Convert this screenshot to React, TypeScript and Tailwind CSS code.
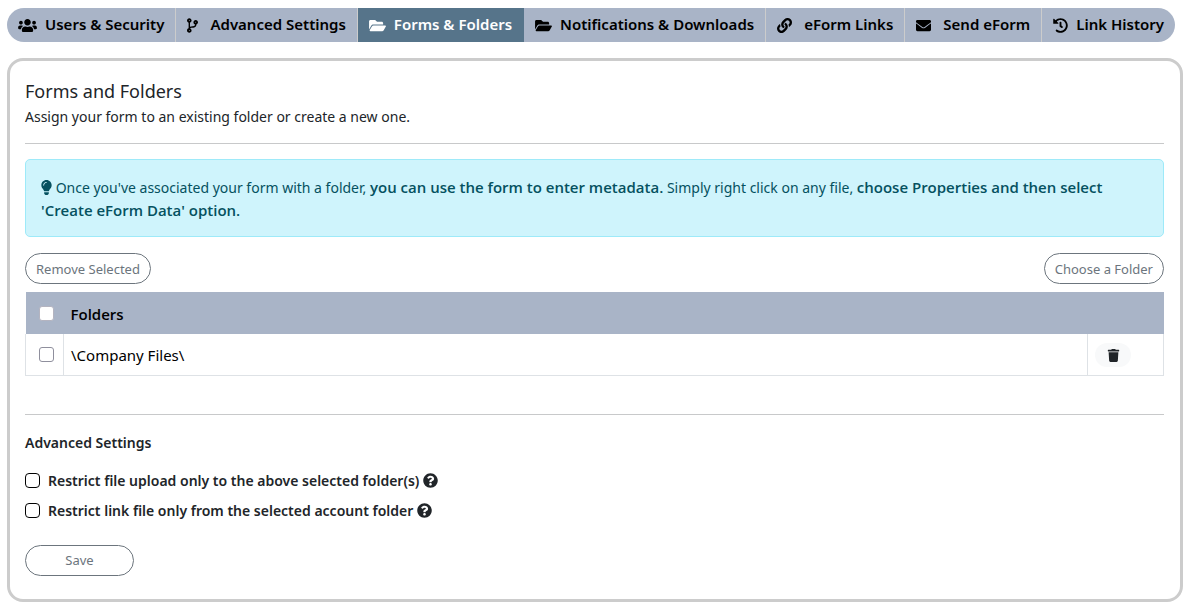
import { useState } from 'react';
import type { IconType } from 'react-icons';
import {
  FaUsers,
  FaCodeBranch,
  FaFolderOpen,
  FaLink,
  FaEnvelope,
  FaHistory,
  FaLightbulb,
  FaTrash,
  FaQuestionCircle,
} from 'react-icons/fa';

interface Tab {
  id: string;
  label: string;
  icon: IconType;
  iconWidth: string;
  gap: string;
}

const TABS: Tab[] = [
  { id: 'users', label: 'Users & Security', icon: FaUsers, iconWidth: 'w-[19px]', gap: 'gap-2' },
  { id: 'advanced', label: 'Advanced Settings', icon: FaCodeBranch, iconWidth: 'w-[11px]', gap: 'gap-3' },
  { id: 'folders', label: 'Forms & Folders', icon: FaFolderOpen, iconWidth: 'w-[17px]', gap: 'gap-2' },
  { id: 'notifications', label: 'Notifications & Downloads', icon: FaFolderOpen, iconWidth: 'w-[17px]', gap: 'gap-2' },
  { id: 'links', label: 'eForm Links', icon: FaLink, iconWidth: 'w-[15px]', gap: 'gap-3' },
  { id: 'send', label: 'Send eForm', icon: FaEnvelope, iconWidth: 'w-[15px]', gap: 'gap-3' },
  { id: 'history', label: 'Link History', icon: FaHistory, iconWidth: 'w-[15px]', gap: 'gap-2' },
];

const FOLDERS = ['\\Company Files\\'];

const OPTIONS = [
  { id: 'restrict-upload', label: 'Restrict file upload only to the above selected folder(s)' },
  { id: 'restrict-link', label: 'Restrict link file only from the selected account folder' },
];

const checkbox = 'block size-[15px] appearance-none bg-white border checked:bg-[#56748a]';
const strong = "font-['Open_Sans','Noto_Sans',sans-serif] text-[15px] font-semibold";
const outlineButton =
  'h-[31px] rounded-full border border-[#6c757d] text-[13px] leading-5 text-[#6c757d] hover:bg-gray-100';

function TabBar({ active, onSelect }: { active: string; onSelect: (id: string) => void }) {
  return (
    <nav className="flex w-fit overflow-hidden rounded-full bg-[#a9b4c7]">
      {TABS.map(({ id, label, icon: Icon, iconWidth, gap }) => (
        <button
          key={id}
          onClick={() => onSelect(id)}
          className={`flex h-[34px] items-center border-r px-[11px] text-[15px] font-semibold whitespace-nowrap last:border-r-0 ${gap} ${
            id === active ? 'border-[#56748a] bg-[#56748a] text-white' : 'border-[#ccc] text-black'
          }`}
        >
          <Icon className={`h-[15px] ${iconWidth}`} />
          {label}
        </button>
      ))}
    </nav>
  );
}

function FolderTable({ selected, onToggle }: { selected: string[]; onToggle: (folder: string) => void }) {
  return (
    <table className="mt-2 w-full table-fixed border-collapse text-left text-black">
      <thead>
        <tr className="h-[42px] bg-[#a9b4c7]">
          <th className="w-[38px] pl-[13px]">
            <input
              type="checkbox"
              aria-label="Select all folders"
              checked={selected.length === FOLDERS.length}
              onChange={() => FOLDERS.forEach(onToggle)}
              className={`${checkbox} rounded-[3px] border-[#b4b4c0]`}
            />
          </th>
          <th className={`pt-1 pl-[7px] ${strong}`}>Folders</th>
          <th className="w-[76px]" />
        </tr>
      </thead>
      <tbody>
        {FOLDERS.map((folder) => (
          <tr key={folder} className="h-[41px] border-b border-[#dee2e6]">
            <td className="border-x border-[#dee2e6] pl-[13px]">
              <input
                type="checkbox"
                aria-label={folder}
                checked={selected.includes(folder)}
                onChange={() => onToggle(folder)}
                className={`${checkbox} rounded-[3px] border-[#8f8f9d]`}
              />
            </td>
            <td className="border-r border-[#dee2e6] pt-[2px] pl-[7px] text-[15px]">{folder}</td>
            <td className="border-r border-[#dee2e6] pt-[2px] pl-[7px]">
              <button
                aria-label="Delete folder"
                className="flex h-6 w-9 items-center justify-center rounded-full bg-[#f8f9fa] text-[#212529]"
              >
                <FaTrash size={13} />
              </button>
            </td>
          </tr>
        ))}
      </tbody>
    </table>
  );
}

export default function App() {
  const [tab, setTab] = useState('folders');
  const [selected, setSelected] = useState<string[]>([]);

  const toggle = (folder: string) =>
    setSelected((prev) => (prev.includes(folder) ? prev.filter((f) => f !== folder) : [...prev, folder]));

  return (
    <div className="bg-white pt-2 pr-[5px] pb-2 pl-[7px] font-['Noto_Sans',sans-serif] text-sm text-[#212529]">
      <TabBar active={tab} onSelect={setTab} />

      <main className="mt-4 rounded-2xl border-3 border-[#ccc] pt-4 pr-4 pb-[23px] pl-[15px]">
        <h1 className="text-lg leading-7">Forms and Folders</h1>
        <p className="leading-6">Assign your form to an existing folder or create a new one.</p>
        <hr className="mt-[14px] border-[#c8c9ca]" />

        <div className="mt-[15px] rounded-[5px] border border-[#9eeaf9] bg-[#cff4fc] px-[15px] pt-4 pb-[14px] leading-[23px] text-[#055160]">
          <FaLightbulb size={15} className="inline w-[11px] align-[-2px]" />
          {" Once you've associated your form with a folder, "}
          <b className={strong}>you can use the form to enter metadata.</b> Simply right click on any file,{' '}
          <b className={strong}>
            choose Properties and then select <span className="whitespace-nowrap">'Create eForm Data' option.</span>
          </b>
        </div>

        <div className="mt-4 flex justify-between">
          <button onClick={() => setSelected([])} className={`${outlineButton} px-[10px]`}>
            Remove Selected
          </button>
          <button className={`${outlineButton} px-[10px]`}>Choose a Folder</button>
        </div>

        <FolderTable selected={selected} onToggle={toggle} />

        <hr className="mt-[38px] border-[#c8c9ca]" />
        <h2 className="mt-4 leading-6 font-semibold">Advanced Settings</h2>
        <div className="mt-[11px]">
          {OPTIONS.map(({ id, label }) => (
            <div key={id} className="flex h-[30px] items-center font-semibold">
              <input id={id} type="checkbox" className={`${checkbox} rounded border-black`} />
              <label htmlFor={id} className="ml-2">
                {label}
              </label>
              <FaQuestionCircle size={15} className="ml-1" />
            </div>
          ))}
        </div>
        <button className={`${outlineButton} mt-[19px] w-[109px]`}>Save</button>
      </main>
    </div>
  );
}
